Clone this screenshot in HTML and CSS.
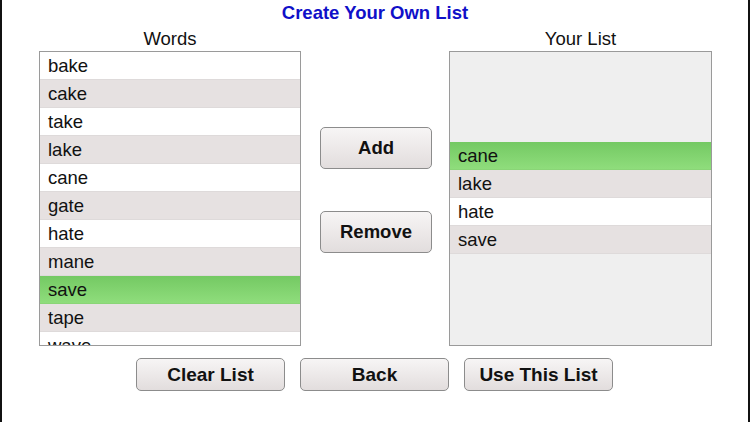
FILE: index.html
```html
<!DOCTYPE html>
<html>
<head>
<meta charset="utf-8">
<link rel="stylesheet" href="styles.css">
</head>
<body>
<div class="screen">
  <h1 class="title">Create Your Own List</h1>
  <div class="main">
    <div class="col">
      <div class="label">Words</div>
      <div class="list">
        <div class="row">bake</div>
        <div class="row alt">cake</div>
        <div class="row">take</div>
        <div class="row alt">lake</div>
        <div class="row">cane</div>
        <div class="row alt">gate</div>
        <div class="row">hate</div>
        <div class="row alt">mane</div>
        <div class="row sel">save</div>
        <div class="row alt">tape</div>
        <div class="row">wave</div>
      </div>
    </div>
    <div class="mid">
      <button class="btn big">Add</button>
      <button class="btn big">Remove</button>
    </div>
    <div class="col">
      <div class="label">Your List</div>
      <div class="list mine">
        <div class="row sel">cane</div>
        <div class="row alt">lake</div>
        <div class="row">hate</div>
        <div class="row alt">save</div>
      </div>
    </div>
  </div>
  <div class="actions">
    <button class="btn wide">Clear List</button>
    <button class="btn wide">Back</button>
    <button class="btn wide">Use This List</button>
  </div>
</div>
</body>
</html>
```
FILE: styles.css
```css
html, body {
  margin: 0;
  padding: 0;
  background: #fff;
}
.screen {
  width: 750px;
  height: 422px;
  box-sizing: border-box;
  border-left: 2px solid #111;
  border-right: 2px solid #111;
  font-family: "Liberation Sans", Arial, sans-serif;
  color: #111;
  display: flex;
  flex-direction: column;
  overflow: hidden;
}
.title {
  margin: 0;
  height: 25px;
  line-height: 25px;
  font-size: 18.5px;
  font-weight: bold;
  color: #1010c8;
  text-align: center;
}
.main {
  display: grid;
  grid-template-columns: 262px 112px 263px;
  column-gap: 18px;
  padding-left: 37px;
  margin-top: 4px;
}
.main > .mid { margin-left: 1px; }
.col {
  display: flex;
  flex-direction: column;
}
.label {
  height: 20px;
  line-height: 20px;
  font-size: 18.5px;
  text-align: center;
  margin-bottom: 2px;
}
.list {
  height: 295px;
  box-sizing: border-box;
  border: 1px solid #9a9a9a;
  background: #fff;
  overflow: hidden;
}
.list.mine {
  background: #efefef;
  padding-top: 90px;
}
.row {
  height: 28px;
  box-sizing: border-box;
  line-height: 28px;
  padding-left: 8px;
  font-size: 18.5px;
  background: #fff;
  border-bottom: 1px solid #dedada;
}
.row.alt { background: #e6e1e1; }
.row.sel {
  background: linear-gradient(#74c963, #8fdd7c);
  border-bottom-color: #8ad577;
}
.mid {
  display: flex;
  flex-direction: column;
  gap: 42px;
  padding-top: 98px;
}
.btn {
  font-family: "Liberation Sans", Arial, sans-serif;
  font-weight: bold;
  color: #111;
  border: 1px solid #8c8c8c;
  border-radius: 5px;
  background: linear-gradient(#f7f5f5, #e2dddd);
  padding: 0;
  margin: 0;
  cursor: pointer;
}
.btn.big {
  width: 112px;
  height: 42px;
  font-size: 18.5px;
}
.actions {
  display: flex;
  justify-content: center;
  gap: 15px;
  margin-top: 12px;
  padding-right: 1px;
}
.btn.wide {
  width: 149px;
  height: 33px;
  font-size: 19px;
}
```
